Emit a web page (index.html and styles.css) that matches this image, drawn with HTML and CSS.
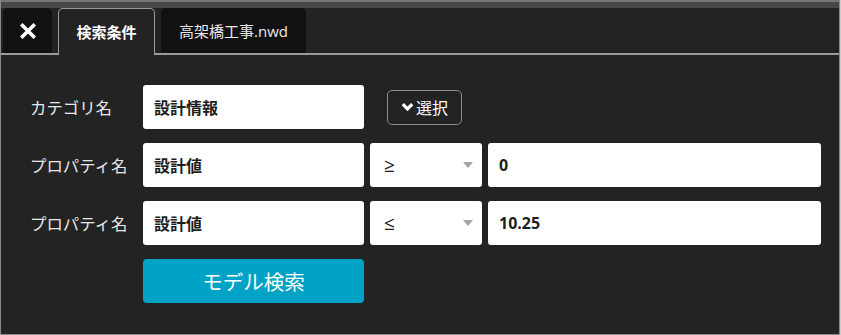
FILE: index.html
```html
<!DOCTYPE html>
<html lang="ja">
<head>
  <meta charset="UTF-8" />
  <meta name="viewport" content="width=device-width, initial-scale=1.0"/>
  <title>検索条件</title>
  <link rel="stylesheet" href="styles.css">
</head>
<body>
  <div class="panel">
    <div class="top-strip"></div>

    <div class="tabs">
      <div class="tab tab-close">
        <svg width="16" height="16" viewBox="0 0 16 16">
          <path d="M2.5 2.5 L13.5 13.5 M13.5 2.5 L2.5 13.5" stroke="#fff" stroke-width="3.6" stroke-linecap="square"/>
        </svg>
      </div>
      <div class="tab active">検索条件</div>
      <div class="tab">高架橋工事.nwd</div>
    </div>

    <div class="form">
      <label class="label">カテゴリ名</label>
      <div class="field">設計情報</div>
      <div class="pick-cell">
        <button class="pick">
          <svg width="13" height="10" viewBox="0 0 13 10">
            <path d="M1.8 2.2 L6.5 6.9 L11.2 2.2" stroke="#fff" stroke-width="3.2" fill="none"/>
          </svg>
          選択
        </button>
      </div>

      <label class="label">プロパティ名</label>
      <div class="field">設計値</div>
      <div class="field select"><span>≥</span><i class="caret"></i></div>
      <div class="field value">0</div>

      <label class="label">プロパティ名</label>
      <div class="field">設計値</div>
      <div class="field select"><span>≤</span><i class="caret"></i></div>
      <div class="field value">10.25</div>

      <div></div>
      <button class="search">モデル検索</button>
    </div>
  </div>
</body>
</html>
```

FILE: styles.css
```css
:root {
  --panel: #232323;
  --tab-dark: #111;
  --line: #9a9a9a;
  --text: #e8e8e8;
  --accent: #00a3c5;
}

body {
  margin: 0;
  padding: 0;
  background: #ccc;
  font-family: "Open Sans", "Noto Sans CJK JP", sans-serif;
}

.panel {
  width: 840px;
  height: 335px;
  box-sizing: border-box;
  background: var(--panel);
  border-left: 1px solid #8a8a8a;
  border-right: 1px solid #8a8a8a;
  border-bottom: 1px solid #8a8a8a;
}

.top-strip {
  height: 6px;
  background: #474747;
  border-top: 2px solid #767676;
}

.tabs {
  display: flex;
  align-items: flex-end;
  gap: 6px;
  height: 45px;
  padding-left: 2px;
  border-bottom: 2px solid var(--line);
}

.tab {
  height: 45px;
  box-sizing: border-box;
  background: var(--tab-dark);
  border-radius: 5px 5px 0 0;
  color: var(--text);
  font-size: 15px;
  display: flex;
  align-items: center;
  justify-content: center;
  width: 145px;
}

.tab-close {
  width: 49px;
}

.tab.active {
  width: 97px;
  height: 47px;
  margin-bottom: -2px;
  background: var(--panel);
  border: 1px solid var(--line);
  border-bottom: none;
  color: #fff;
  font-weight: bold;
  padding-bottom: 2px;
}

.form {
  display: grid;
  grid-template-columns: 107px 221px 112px 1fr;
  grid-auto-rows: 44px;
  column-gap: 6px;
  row-gap: 14px;
  padding: 30px 18px 0 29px;
}

.label {
  display: flex;
  align-items: center;
  color: var(--text);
  font-size: 16.4px;
  white-space: nowrap;
}

.field {
  background: #fff;
  border-radius: 3px;
  display: flex;
  align-items: center;
  padding: 0 11px;
  color: #1e1e1e;
  font-size: 16px;
  font-weight: bold;
}

.select {
  justify-content: space-between;
  padding: 0 9px 0 14px;
  font-weight: normal;
  font-size: 19px;
}

.caret {
  width: 0;
  height: 0;
  border-left: 5px solid transparent;
  border-right: 5px solid transparent;
  border-top: 6px solid #a5a5a5;
}

.pick-cell {
  grid-column: span 2;
  display: flex;
  align-items: center;
  padding-left: 17px;
}

.pick {
  height: 35px;
  width: 75px;
  background: var(--panel);
  border: 1px solid #8c8c8c;
  border-radius: 5px;
  color: #fff;
  font-family: inherit;
  font-size: 16px;
  display: flex;
  align-items: center;
  justify-content: center;
  gap: 2px;
  padding: 0;
}

.search {
  background: var(--accent);
  color: #fff;
  border: none;
  border-radius: 4px;
  font-family: inherit;
  font-size: 20.5px;
  padding: 0;
}
```
